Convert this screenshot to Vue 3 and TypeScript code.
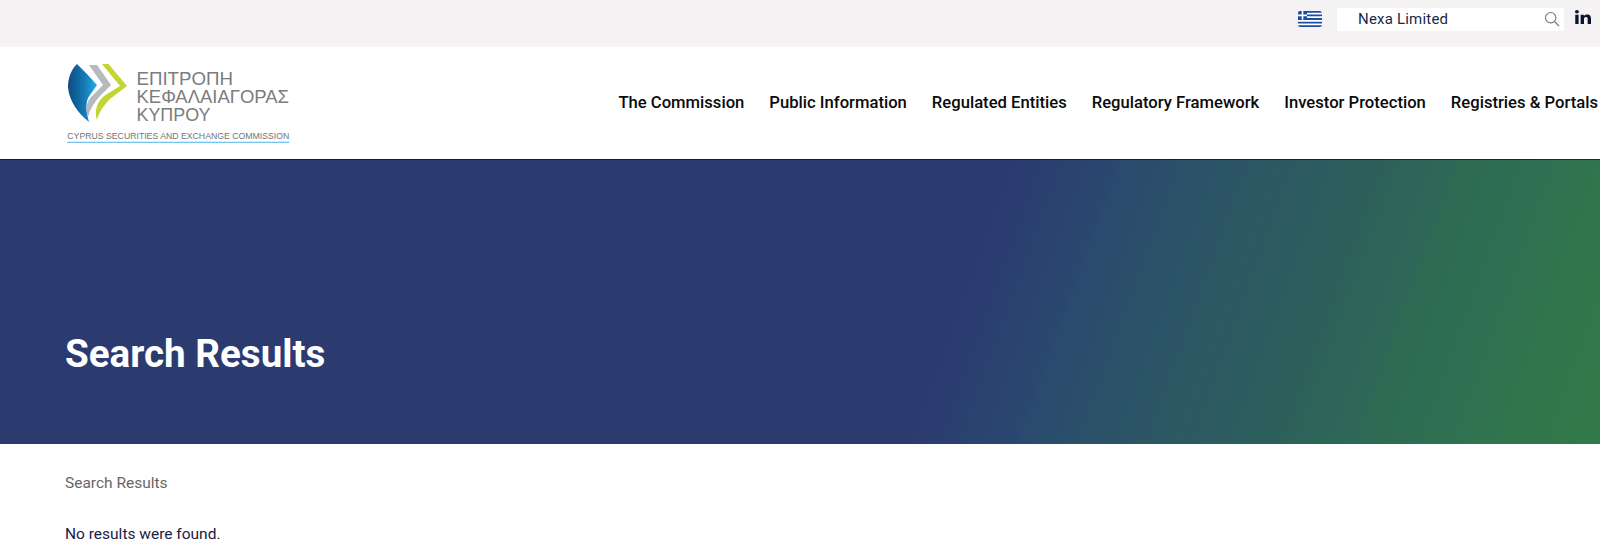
<script setup lang="ts">
const navItems: string[] = [
  'The Commission',
  'Public Information',
  'Regulated Entities',
  'Regulatory Framework',
  'Investor Protection',
  'Registries & Portals',
]
</script>

<template>
  <div class="page">
    <div class="topbar">
      <svg class="flag" viewBox="0 0 24 16" width="24" height="16" aria-label="Greek">
        <defs>
          <clipPath id="flagclip"><rect width="24" height="16" rx="2.5" /></clipPath>
        </defs>
        <g clip-path="url(#flagclip)">
          <rect width="24" height="16" fill="#fff" />
          <path d="M0 .9h24M0 4.4h24M0 8h24M0 11.6h24M0 15.1h24" stroke="#1d4f9f" stroke-width="1.8" />
          <rect width="9" height="8.8" fill="#1d4f9f" />
          <path d="M4.500 0v8.800M0 4.400h9" stroke="#fff" stroke-width="1.600" />
        </g>
      </svg>
      <div class="search">
        <span class="search-text">Nexa Limited</span>
        <svg class="search-icon" viewBox="0 0 16 16" width="16" height="16">
          <circle cx="6.700" cy="6.700" r="5.200" fill="none" stroke="#6f7a85" stroke-width="1.100" />
          <path d="M10.600 10.600l4.400 4.400" stroke="#6f7a85" stroke-width="1.300" />
        </svg>
      </div>
      <svg class="linkedin" viewBox="0 0 448 448" width="16" height="14" preserveAspectRatio="none" aria-label="LinkedIn">
        <path fill="#0c1230" d="M100.280 448H7.400V148.900h92.880zM53.790 108.100C24.090 108.100 0 83.500 0 53.800a53.790 53.790 0 0 1 107.580 0c0 29.700-24.100 54.300-53.790 54.300zM447.900 448h-92.680V302.400c0-34.700-.7-79.200-48.290-79.200-48.290 0-55.690 37.700-55.690 76.700V448h-92.780V148.900h89.080v40.800h1.300c12.400-23.500 42.690-48.300 87.880-48.300 94 0 111.280 61.900 111.280 142.300V448z" />
      </svg>
    </div>

    <header class="header">
      <svg class="logo" viewBox="0 0 240 100" width="240" height="100" aria-label="Cyprus Securities and Exchange Commission">
        <defs>
          <linearGradient id="blue" x1="0" y1="0" x2="1" y2="0">
            <stop offset="0" stop-color="#0f4a80" />
            <stop offset="0.550" stop-color="#1478b4" />
            <stop offset="1" stop-color="#23aee6" />
          </linearGradient>
        </defs>
        <path d="M11 1C5 7 2 15 2 24c1 14 10 26 21 35-3-12-4-21 1-27l7-10L21 11z" fill="url(#blue)" />
        <path d="M23 2h8l14 20-12 12c-5 6-9 12-11 20-3-7-2-15 4-21l11-11z" fill="#b6b9bd" />
        <path d="M36 1h6.500L61 23 44 36c-6 6-11 13-13 21-3-9 0-18 7-24l16-10z" fill="#c3d52f" />
        <text class="logo-gr" x="70.500" y="22" textLength="96.400" lengthAdjust="spacingAndGlyphs">ΕΠΙΤΡΟΠΗ</text>
        <text class="logo-gr" x="70.500" y="40" textLength="152.500" lengthAdjust="spacingAndGlyphs">ΚΕΦΑΛΑΙΑΓΟΡΑΣ</text>
        <text class="logo-gr" x="70.500" y="58" textLength="74" lengthAdjust="spacingAndGlyphs">ΚΥΠΡΟΥ</text>
        <text class="logo-en" x="1.300" y="76" textLength="222" lengthAdjust="spacingAndGlyphs">CYPRUS SECURITIES AND EXCHANGE COMMISSION</text>
        <rect x="1.300" y="78.700" width="222" height="1.300" fill="#74c6ee" />
      </svg>
      <nav class="nav">
        <a v-for="item in navItems" :key="item" class="nav-item">{{ item }}</a>
      </nav>
    </header>

    <section class="hero">
      <h1 class="hero-title">Search Results</h1>
    </section>

    <main class="content">
      <div class="crumb">Search Results</div>
      <p class="message">No results were found.</p>
    </main>
  </div>
</template>

<style>
html, body { margin: 0; background: #fff; overflow: hidden; }
</style>

<style scoped>
.page {
  width: 1600px;
  height: 557px;
  overflow: hidden;
  font-family: Roboto, "Liberation Sans", sans-serif;
  background: #fff;
}
.topbar {
  height: 47px;
  box-sizing: border-box;
  background: #f4f2f3;
  display: flex;
  align-items: flex-start;
  justify-content: flex-end;
  padding-right: 9px;
}
.flag { margin: 11px 15px 0 0; }
.search {
  width: 227px;
  height: 23px;
  margin-top: 8px;
  background: #fff;
  display: flex;
  align-items: center;
  justify-content: space-between;
  box-sizing: border-box;
  padding: 0 4px 2px 21px;
}
.search-text { font-size: 15px; color: #1b2a4a; letter-spacing: .2px; margin-top: 1px; }
.linkedin { margin: 10px 0 0 11px; }
.header {
  height: 112px;
  display: flex;
  align-items: flex-start;
  justify-content: space-between;
  padding-left: 66px;
  box-sizing: border-box;
}
.logo { margin-top: 16px; flex: none; }
.logo-gr { font-family: "Liberation Sans", sans-serif; font-size: 18.500px; fill: #7a7c7e; }
.logo-en { font-family: "Liberation Sans", sans-serif; font-size: 9px; fill: #707376; }
.nav {
  display: flex;
  gap: 25px;
  padding-top: 46px;
  margin-right: 2px;
  white-space: nowrap;
}
.nav-item { font-size: 16.640px; font-weight: 500; line-height: 19px; color: #0a0a0a; }
.hero {
  height: 285px;
  box-sizing: border-box;
  border-top: 1px solid rgba(0, 0, 50, .6);
  background-origin: border-box;
  background-image: linear-gradient(110deg,
    #2b3b70 0%, #2b3b70 59.200%,
    #2b3f70 61.750%, #2a4170 61.950%,
    #2a486f 65.680%, #2a4a6e 65.900%,
    #2b4f6a 69.090%, #2b516a 69.300%,
    #2c5565 73.260%, #2c5764 73.460%,
    #2d605b 81.420%, #2d625a 81.620%,
    #2e6757 85.350%, #2e6955 85.550%,
    #2f7250 92.160%, #30734f 92.360%,
    #327a48 100%);
  padding: 172px 0 0 65px;
}
.hero-title {
  margin: 0;
  font-size: 38.600px;
  line-height: 44px;
  font-weight: 700;
  color: #fff;
}
.content { padding: 0 65px; }
.crumb { margin-top: 30px; font-size: 15.500px; line-height: 19px; color: #666; }
.message { margin: 32px 0 0; font-size: 15.500px; line-height: 19px; color: #1b2145; }
</style>
